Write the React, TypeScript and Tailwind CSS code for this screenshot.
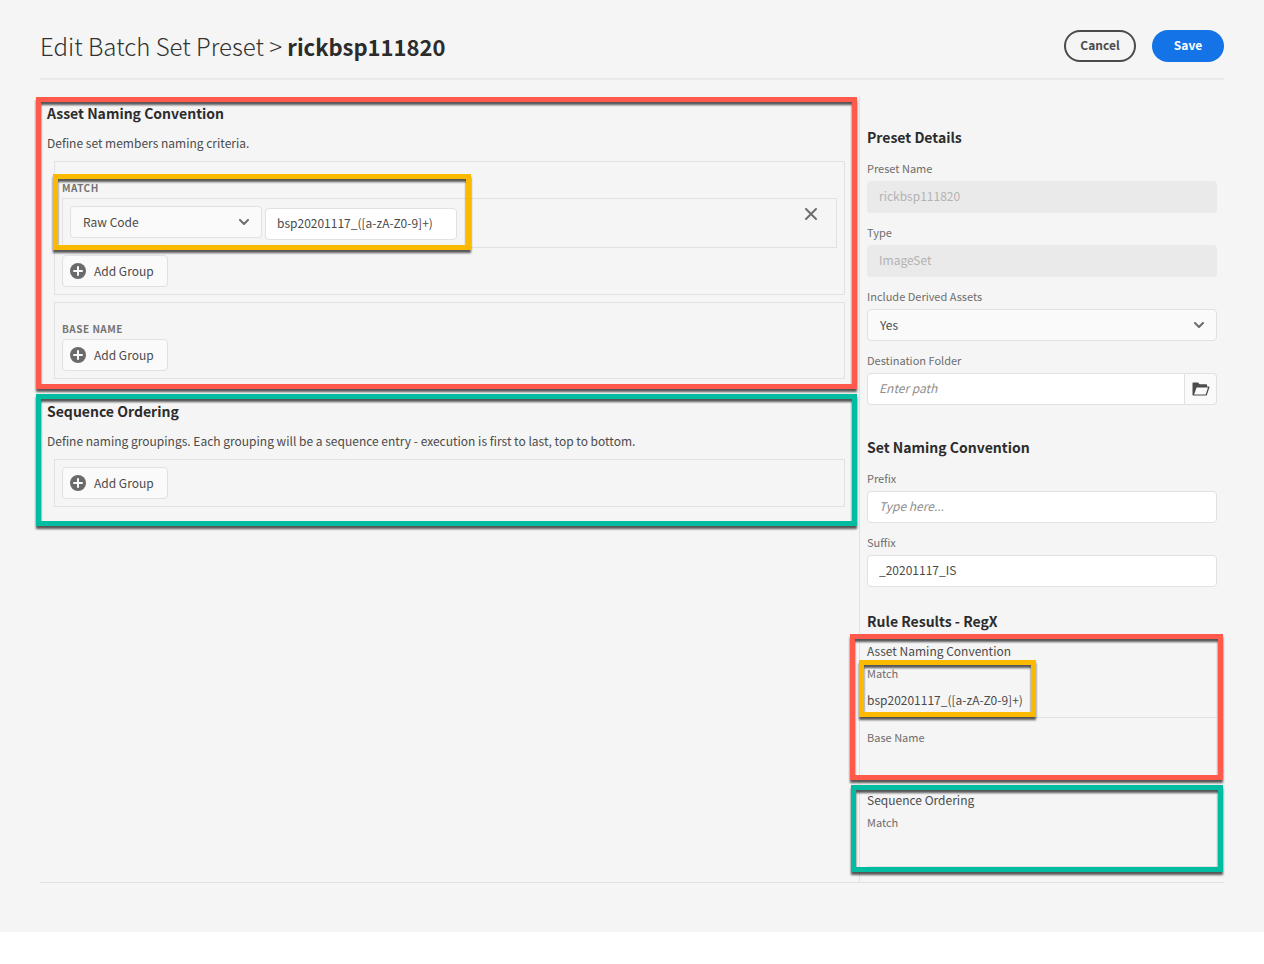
import React, { useId, useState } from "react";

const frameColors = {
  red: "border-[#ff5a4b]",
  teal: "border-[#00bca0]",
  amber: "border-[#fbb900]",
};

function Highlight({ color, className }: { color: keyof typeof frameColors; className: string }) {
  return (
    <div
      aria-hidden="true"
      className={`pointer-events-none absolute border-5 drop-shadow-[0_3px_1px_rgba(0,0,0,0.65)] ${frameColors[color]} ${className}`}
    />
  );
}

function Chevron() {
  return (
    <svg
      viewBox="0 0 10 6"
      aria-hidden="true"
      className="pointer-events-none absolute top-[13px] right-[13px] h-[6px] w-[10px]"
      fill="none"
      stroke="#6e6e6e"
      strokeWidth="2"
      strokeLinecap="round"
      strokeLinejoin="round"
    >
      <path d="M1 1l4 4 4-4" />
    </svg>
  );
}

function Picker({ label, value, id, className = "" }: { label?: string; value: string; id?: string; className?: string }) {
  return (
    <div className={`relative ${className}`}>
      <select
        id={id}
        aria-label={label}
        className="block h-8 w-full appearance-none rounded border border-[#e1e1e1] bg-[#fafafa] pr-8 pl-3 text-[12px] text-[#4b4b4b]"
      >
        <option>{value}</option>
      </select>
      <Chevron />
    </div>
  );
}

function AddGroup() {
  return (
    <button
      type="button"
      className="flex h-8 w-[106px] items-center gap-2 rounded border border-[#e1e1e1] bg-[#fafafa] pl-[7px] text-[12px] text-[#4b4b4b]"
    >
      <svg viewBox="0 0 16 16" aria-hidden="true" className="size-4">
        <circle cx="8" cy="8" r="8" fill="#6a6a6a" />
        <path d="M8 4v8M4 8h8" stroke="#fafafa" strokeWidth="2" strokeLinecap="round" />
      </svg>
      Add Group
    </button>
  );
}

function Field({ label, children }: { label: string; children: (id: string) => React.ReactNode }) {
  const id = useId();
  return (
    <div className="flex flex-col gap-[5px]">
      <label htmlFor={id} className="text-[11px] leading-4 text-[#6e6e6e]">
        {label}
      </label>
      {children(id)}
    </div>
  );
}

const heading = "text-[14px] leading-5 font-bold text-[#2c2c2c]";
const body = "text-[12px] leading-5 text-[#4b4b4b]";
const small = "text-[11px] leading-4 text-[#6e6e6e]";
const eyebrow = "text-[10px] leading-4 font-bold tracking-wider text-[#747474] uppercase";
const textBox =
  "h-8 min-w-0 rounded border border-[#e1e1e1] bg-white px-[11px] pb-1 text-[12px] text-[#4b4b4b] placeholder:text-[#8e8e8e] placeholder:italic";
const disabledBox = "h-8 rounded bg-[#eaeaea] px-3 pb-1 text-[12px] text-[#b3b3b3]";

export default function App() {
  const [pattern, setPattern] = useState("bsp20201117_([a-zA-Z0-9]+)");
  const [suffix, setSuffix] = useState("_20201117_IS");

  return (
    <div className="bg-[#f5f5f5] px-10 pt-[30px] pb-[49px] font-['Noto_Sans_CJK_SC','Noto_Sans',sans-serif]">
      <header className="flex items-center gap-4 border-b-2 border-[#eaeaea] pb-4">
        <h1 className="flex-1 text-[24px] leading-8 font-light text-[#323232]">
          Edit Batch Set Preset &gt; <strong className="text-[22px] font-bold text-[#2c2c2c]">rickbsp111820</strong>
        </h1>
        <button
          type="button"
          className="h-8 w-[72px] rounded-full border-2 border-[#4b4b4b] pb-[2px] text-[12px] font-bold text-[#4b4b4b]"
        >
          Cancel
        </button>
        <button
          type="button"
          className="h-8 w-[72px] rounded-full bg-[#1473e6] pb-[2px] text-[12px] font-bold text-white"
        >
          Save
        </button>
      </header>

      <div className="mt-4 flex border-b border-[#e1e1e1]">
        <main className="min-w-0 flex-1">
          <section className="relative pt-[7px] pr-[14px] pb-[10px] pl-[7px]">
            <h2 className={heading}>Asset Naming Convention</h2>
            <p className={`mt-[10px] ${body}`}>Define set members naming criteria.</p>

            <div className="mt-2 ml-[7px] border border-[#e1e1e1] px-[7px] pt-[18px] pb-[7px]">
              <div className="relative">
                <h3 className={eyebrow}>Match</h3>
                <div className="mt-[2px] mb-[7px] flex items-start gap-[3px] border border-[#e1e1e1] p-[7px]">
                  <Picker label="Rule type" value="Raw Code" className="w-48" />
                  <input
                    aria-label="Pattern"
                    value={pattern}
                    onChange={(e) => setPattern(e.target.value)}
                    className={`mt-[2px] w-48 ${textBox}`}
                  />
                  <button type="button" aria-label="Remove rule" className="mt-px mr-[11px] ml-auto p-[1px]">
                    <svg viewBox="0 0 12 12" className="size-3" stroke="#6e6e6e" strokeWidth="2" strokeLinecap="round">
                      <path d="M1 1l10 10M11 1L1 11" />
                    </svg>
                  </button>
                </div>
                <Highlight color="amber" className="-top-[6px] -bottom-[2px] -left-[9px] w-[418px]" />
              </div>
              <AddGroup />
            </div>

            <div className="mt-[7px] ml-[7px] flex flex-col items-start gap-[2px] border border-[#e1e1e1] px-[7px] pt-[18px] pb-[7px]">
              <h3 className={eyebrow}>Base Name</h3>
              <AddGroup />
            </div>
            <Highlight color="red" className="top-px right-[2px] bottom-0 -left-1" />
          </section>

          <section className="relative mt-[5px] pt-[7px] pr-[14px] pb-[19px] pl-[7px]">
            <h2 className={heading}>Sequence Ordering</h2>
            <p className={`mt-[10px] ${body}`}>
              Define naming groupings. Each grouping will be a sequence entry - execution is first to last, top to
              bottom.
            </p>
            <div className="mt-2 ml-[7px] border border-[#e1e1e1] p-[7px]">
              <AddGroup />
            </div>
            <Highlight color="teal" className="top-0 right-[2px] bottom-0 -left-1" />
          </section>
        </main>

        <aside className="w-[365px] shrink-0 border-l border-[#e1e1e1] px-[7px] pt-[31px] pb-[10px]">
          <h2 className={heading}>Preset Details</h2>
          <div className="mt-[13px] flex flex-col gap-[11px]">
            <Field label="Preset Name">
              {(id) => <input id={id} disabled value="rickbsp111820" className={disabledBox} />}
            </Field>
            <Field label="Type">{(id) => <input id={id} disabled value="ImageSet" className={disabledBox} />}</Field>
            <Field label="Include Derived Assets">{(id) => <Picker id={id} value="Yes" />}</Field>
            <Field label="Destination Folder">
              {(id) => (
                <div className="flex">
                  <input id={id} placeholder="Enter path" className={`flex-1 rounded-r-none ${textBox}`} />
                  <button
                    type="button"
                    aria-label="Browse folders"
                    className="flex h-8 w-8 items-center justify-center rounded-r border border-l-0 border-[#e1e1e1] bg-[#fafafa]"
                  >
                    <svg viewBox="0 0 18 14" className="h-[14px] w-[18px]">
                      <path
                        fill="#4b4b4b"
                        fillRule="evenodd"
                        d="M1.200 .5h4.300c.3 0 .5.1.7.3L7.700 2.300h6.500c.5 0 .9.4.9.9v1.300h1.700c.5 0 .8.4.6.9l-2.500 7.600c-.1.300-.4.500-.7.500H1c-.3 0-.5-.2-.5-.5V1.200c0-.4.3-.7.7-.7zM4.600 5.500L2.100 12.400h11.600l2.300-6.900z"
                      />
                    </svg>
                  </button>
                </div>
              )}
            </Field>
          </div>

          <h2 className={`mt-8 ${heading}`}>Set Naming Convention</h2>
          <div className="mt-[13px] flex flex-col gap-[11px]">
            <Field label="Prefix">{(id) => <input id={id} placeholder="Type here..." className={textBox} />}</Field>
            <Field label="Suffix">
              {(id) => (
                <input id={id} value={suffix} onChange={(e) => setSuffix(e.target.value)} className={textBox} />
              )}
            </Field>
          </div>

          <h2 className={`mt-6 ${heading}`}>Rule Results - RegX</h2>
          <section className="relative mt-[3px] pt-[7px] pb-[35px]">
            <h3 className={body}>Asset Naming Convention</h3>
            <div className="mt-1 border-b border-[#e1e1e1] pb-[7px]">
              <div className="relative">
                <h4 className={small}>Match</h4>
                <p className={`mt-[9px] ${body}`}>{pattern}</p>
                <Highlight color="amber" className="-top-[5px] -bottom-[7px] -left-2 w-[177px]" />
              </div>
            </div>
            <h4 className={`mt-[11px] ${small}`}>Base Name</h4>
            <Highlight color="red" className="top-0 -right-[6px] bottom-0 -left-[17px]" />
          </section>
          <section className="relative mt-[5px] pt-[5px] pb-[5px]">
            <h3 className={body}>Sequence Ordering</h3>
            <div className="mt-1 border-b border-[#e1e1e1] pb-9">
              <h4 className={small}>Match</h4>
            </div>
            <Highlight color="teal" className="top-0 -right-[6px] bottom-0 -left-4" />
          </section>
        </aside>
      </div>
    </div>
  );
}
